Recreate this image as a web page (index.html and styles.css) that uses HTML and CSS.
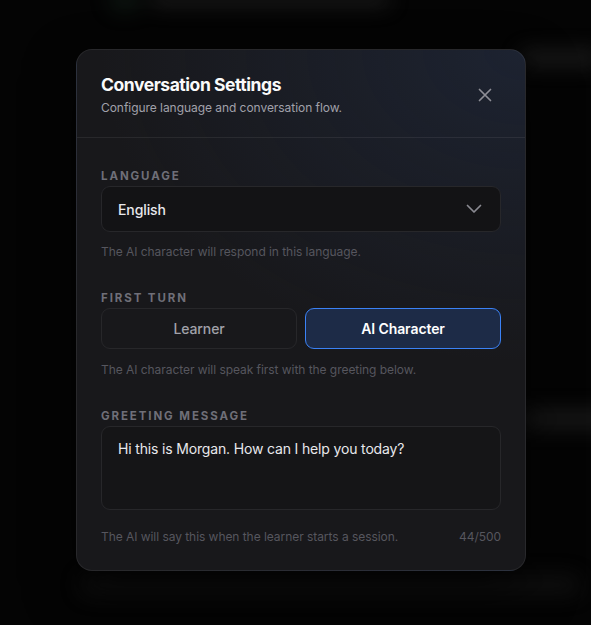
FILE: index.html
```html
<!DOCTYPE html>
<html lang="en">
<head>
<meta charset="utf-8">
<title>Conversation Settings</title>
<link rel="stylesheet" href="styles.css">
</head>
<body>
<div class="page" aria-hidden="true">
  <div class="page-top">
    <span class="blob blob-a"></span>
    <span class="blob blob-b"></span>
  </div>
  <div class="page-row r1"><span class="blob blob-c"></span></div>
  <div class="page-row r2"><span class="blob blob-d"></span></div>
  <div class="page-row r3"></div>
  <div class="page-row r4"><span class="blob blob-f"></span></div>
</div>
<div class="overlay">
  <div class="modal" role="dialog" aria-labelledby="dlg-title">
    <header class="modal-header">
      <div class="header-text">
        <h2 id="dlg-title" class="title">Conversation Settings</h2>
        <p class="subtitle">Configure language and conversation flow.</p>
      </div>
      <button class="close-btn" aria-label="Close">
        <svg width="14" height="14" viewBox="0 0 14 14" fill="none" stroke="currentColor" stroke-width="1.7" stroke-linecap="round"><path d="M1.5 1.5 12.5 12.5M12.5 1.5 1.5 12.5"/></svg>
      </button>
    </header>
    <div class="modal-body">
      <section class="field">
        <div class="label">Language</div>
        <div class="select">
          <span class="select-value">English</span>
          <svg class="chevron" width="16" height="10" viewBox="0 0 16 10" fill="none" stroke="currentColor" stroke-width="1.7" stroke-linecap="round" stroke-linejoin="round"><path d="M1.5 1.5 8 8 14.5 1.5"/></svg>
        </div>
        <p class="help">The AI character will respond in this language.</p>
      </section>
      <section class="field">
        <div class="label">First Turn</div>
        <div class="toggle">
          <button class="toggle-btn">Learner</button>
          <button class="toggle-btn active">AI Character</button>
        </div>
        <p class="help help-toggle">The AI character will speak first with the greeting below.</p>
      </section>
      <section class="field">
        <div class="label">Greeting Message</div>
        <div class="textarea">Hi this is Morgan. How can I help you today?</div>
        <div class="footer-row">
          <span>The AI will say this when the learner starts a session.</span>
          <span>44/500</span>
        </div>
      </section>
    </div>
  </div>
</div>
</body>
</html>
```

FILE: styles.css
```css
* { box-sizing: border-box; }
html, body {
  margin: 0;
  padding: 0;
  width: 591px;
  height: 625px;
  overflow: hidden;
  background: #040404;
  font-family: Inter, "Noto Sans", "DejaVu Sans", sans-serif;
  -webkit-font-smoothing: antialiased;
}

/* blurred page behind the dialog */
.page {
  position: absolute;
  inset: 0;
  filter: blur(10px);
  opacity: 0.9;
}
.page-top { height: 60px; position: relative; }
.page-row { position: relative; height: 140px; }
.blob {
  position: absolute;
  display: block;
  border-radius: 10px;
  background: #1a1a1a;
}
.blob-a { left: 110px; top: -10px; width: 30px; height: 20px; background: #0f1a14; }
.blob-b { left: 150px; top: -8px; width: 240px; height: 14px; background: #1e1e1e; }
.blob-c { left: 520px; top: -10px; width: 80px; height: 16px; background: #1d1d1d; }
.blob-d { left: 520px; top: 210px; width: 90px; height: 18px; background: #1c1c1c; }
.blob-f { left: 80px; top: 95px; width: 500px; height: 20px; background: #111; }

.overlay {
  position: absolute;
  inset: 0;
  display: flex;
  align-items: center;
  justify-content: center;
  padding: 0 0 5px 11px;
}

.modal {
  width: 450px;
  background:
    radial-gradient(ellipse 95% 60% at 100% 0%, rgba(40, 60, 100, 0.30), rgba(40, 60, 100, 0) 100%),
    #18181b;
  border: 1px solid rgba(255, 255, 255, 0.07);
  border-radius: 16px;
  box-shadow: 0 20px 50px rgba(0, 0, 0, 0.6);
  overflow: hidden;
}

.modal-header {
  display: flex;
  align-items: center;
  justify-content: space-between;
  padding: 24px 24px 20px 24px;
  border-bottom: 1px solid rgba(255, 255, 255, 0.07);
}
.title {
  margin: 0;
  font-size: 17.5px;
  line-height: 22px;
  font-weight: 700;
  letter-spacing: -0.45px;
  color: #fafafa;
}
.subtitle {
  margin: 3px 0 0;
  font-size: 12px;
  line-height: 18px;
  color: #a1a1aa;
  letter-spacing: -0.05px;
}
.close-btn {
  width: 32px;
  height: 32px;
  display: flex;
  align-items: center;
  justify-content: center;
  margin-top: -2px;
  background: none;
  border: 0;
  padding: 0;
  color: #8e8e96;
}

.modal-body {
  display: flex;
  flex-direction: column;
  gap: 30px;
  padding: 30px 24px 25px;
}
.field { display: flex; flex-direction: column; }
.label {
  font-size: 11.5px;
  line-height: 16px;
  font-weight: 700;
  letter-spacing: 1.9px;
  text-transform: uppercase;
  color: #6f6f78;
  margin-bottom: 2px;
}
.select {
  height: 46px;
  display: flex;
  align-items: center;
  justify-content: space-between;
  padding: 0 18px 0 16px;
  background: #131315;
  border: 1px solid #27272a;
  border-radius: 9px;
}
.select-value {
  font-size: 14px;
  color: #e8e8ec;
  font-weight: 500;
  letter-spacing: -0.1px;
}
.chevron { color: #8a8a92; }

.help {
  margin: 12px 0 0;
  font-size: 12px;
  line-height: 16px;
  color: #56565e;
  letter-spacing: -0.05px;
}
.help-toggle { margin-top: 13px; }

.toggle {
  display: grid;
  grid-template-columns: 1fr 1fr;
  gap: 8px;
}
.toggle-btn {
  height: 41px;
  font-family: inherit;
  font-size: 14px;
  font-weight: 500;
  letter-spacing: -0.1px;
  color: #a1a1aa;
  background: #18181b;
  border: 1px solid #27272a;
  border-radius: 9px;
  padding: 0;
}
.toggle-btn.active {
  background: #1d2b47;
  border-color: #3b82f6;
  color: #ffffff;
  font-weight: 600;
}

.textarea {
  height: 84px;
  padding: 12px 16px;
  font-size: 14px;
  line-height: 20px;
  letter-spacing: -0.16px;
  color: #e8e8ec;
  background: #151517;
  border: 1px solid #27272a;
  border-radius: 9px;
}
.footer-row {
  display: flex;
  justify-content: space-between;
  margin-top: 19px;
  font-size: 12px;
  line-height: 16px;
  color: #56565e;
  letter-spacing: -0.05px;
}
```
